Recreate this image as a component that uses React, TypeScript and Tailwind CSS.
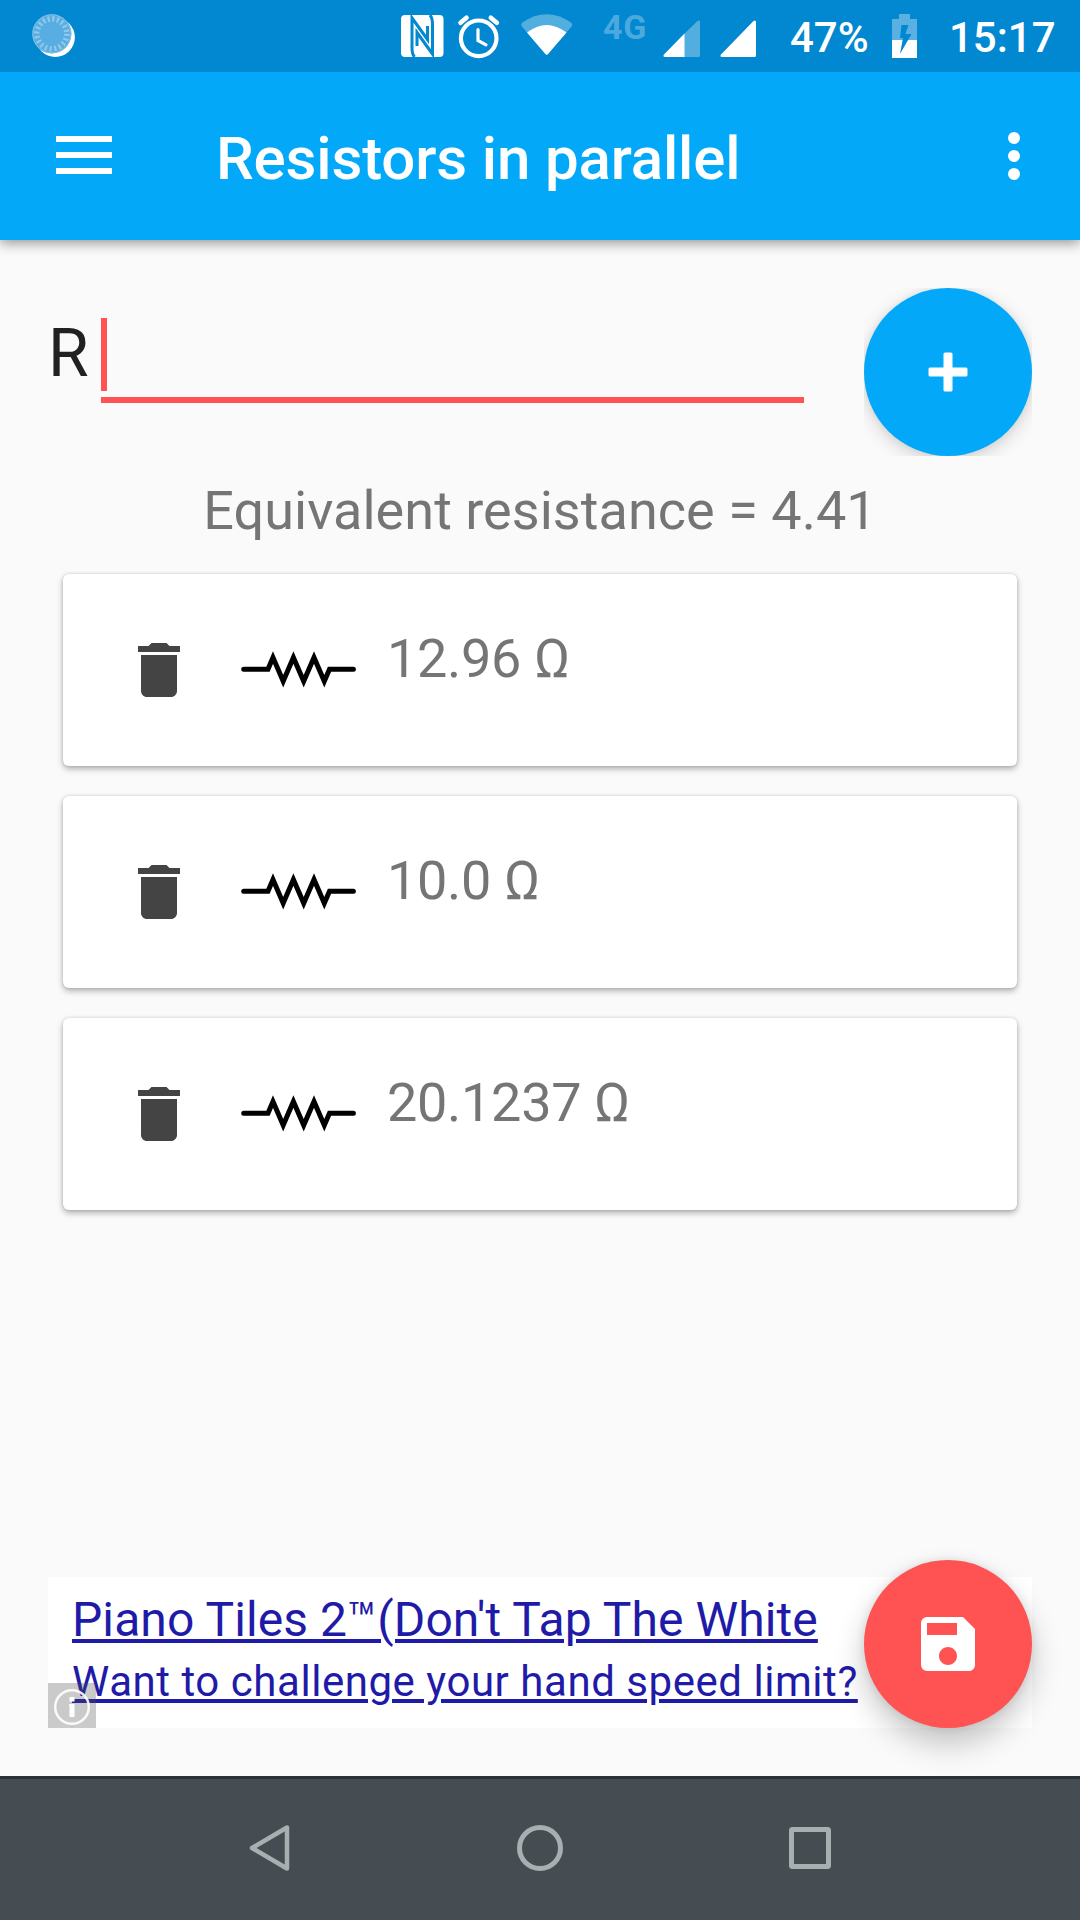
import React from "react";
import { MdDelete, MdSave } from "react-icons/md";

const resistors = ["12.96 Ω", "10.0 Ω", "20.1237 Ω"];

function StatusBar() {
  return (
    <div className="relative z-20 flex h-[72px] shrink-0 bg-[#0288d1] text-[42px] font-medium leading-[75px] text-white">
      <svg className="ml-[30px] h-[72px] w-[48px]" viewBox="30 0 48 72">
        <circle cx="55.3" cy="37.3" r="19.6" fill="#fff" />
        <circle cx="51.8" cy="33.8" r="19.6" fill="#58aee2" />
        <circle cx="51.8" cy="33.8" r="15" fill="none" stroke="#94c8ea" strokeWidth="5.500" strokeDasharray="2.1 2.612" />
        <circle cx="51.8" cy="33.8" r="19" fill="none" stroke="#7fc0e8" strokeWidth="1" />
      </svg>
      <svg className="ml-[320px] h-[72px] w-[50px]" viewBox="398 0 50 72">
        <rect x="401" y="15" width="42.5" height="42" rx="4" fill="#fff" />
        <path d="M414.500 57 Q412 54 412 48 V18 L427.500 39.500 V26 M430 15 Q432.500 18 432.500 24 V54 L417 32.500 V46" fill="none" stroke="#0288d1" strokeWidth="3" />
      </svg>
      <svg className="ml-[6px] h-[72px] w-[50px]" viewBox="454 0 50 72" fill="none" stroke="#fff" strokeLinecap="round">
        <circle cx="478.700" cy="38.300" r="17.800" strokeWidth="4.200" />
        <path d="M478 29.500 V40.500 L486 44.800" strokeWidth="3.200" />
        <path d="M460.500 22.800 L466.500 17.800 M490.800 17.800 L496.800 22.800" strokeWidth="4.600" />
      </svg>
      <svg className="ml-[14px] h-[72px] w-[58px]" viewBox="518 0 58 72" fill="#fff">
        <path d="M521.500 26 Q520.500 24 522.500 22.500 Q546.700 6 571 22.500 Q573 24 572 26 L548 54 Q546.700 55.500 545.400 54 Z" opacity="0.32" />
        <path d="M527 32.500 Q546.700 17.500 566.500 32.500 L548 54 Q546.700 55.500 545.400 54 Z" />
      </svg>
      <span className="ml-[27px] w-[50px] text-[34px] font-bold leading-[54px] tracking-[0.8px] text-[#4ca9de]">4G</span>
      <svg className="ml-[7px] h-[72px] w-[110px]" viewBox="660 0 110 72" fill="#fff">
        <path d="M684 34 L697.500 21 Q700 19.500 700 22 V55.500 Q700 57 698.500 57 H684 Z" opacity="0.32" />
        <path d="M684.500 33.500 V57 H665 Q662.500 56.500 664 54.500 Z" />
        <path d="M721 54.500 L753.500 21 Q756 19.500 756 22 V55.500 Q756 57 754.500 57 H722 Q719.500 56.500 721 54.500 Z" />
      </svg>
      <span className="ml-[20px] w-[96px]">47%</span>
      <svg className="ml-[4px] h-[72px] w-[30px]" viewBox="890 0 30 72">
        <path d="M892 19 H899 V14 H910 V19 H917 V40 H892 Z" fill="#5ab0e1" />
        <path d="M892 40 H917 V58 H892 Z" fill="#fff" />
        <path d="M901.500 25 H908.500 L905.500 34 H911.500 L900 54 L903 38 H900 Z" fill="#0288d1" />
      </svg>
      <span className="ml-[29px]">15:17</span>
    </div>
  );
}

function AppBar() {
  return (
    <header className="relative z-10 flex h-[168px] shrink-0 items-center bg-[#03a9f8] pl-[56px] pr-[60px] text-white shadow-[0_3px_12px_rgba(0,0,0,0.42)]">
      <div className="mb-[2px] flex w-[56px] flex-col gap-[10px]">
        <div className="h-[6px] bg-white" />
        <div className="h-[6px] bg-white" />
        <div className="h-[6px] bg-white" />
      </div>
      <h1 className="ml-[104px] mt-[5px] whitespace-nowrap text-[60px] font-medium leading-[72px] tracking-[-0.15px]">Resistors in parallel</h1>
      <div className="ml-auto flex flex-col gap-[6px]">
        <div className="size-[12px] rounded-full bg-white" />
        <div className="size-[12px] rounded-full bg-white" />
        <div className="size-[12px] rounded-full bg-white" />
      </div>
    </header>
  );
}

function ResistorIcon() {
  return (
    <svg className="ml-[44px] h-[72px] w-[120px]" viewBox="239 634 120 72" fill="none" stroke="#000" strokeWidth="5" strokeLinecap="round" strokeMiterlimit="10">
      <path d="M243.700 669.300 H268 L273 657.500 L283.200 681.200 L293.400 657.500 L303.700 681.200 L314 657.500 L324.300 681.200 L329.500 669.300 H353.400" />
    </svg>
  );
}

function ResistorCard({ value }: { value: string }) {
  return (
    <div className="flex h-[192px] items-start rounded-[6px] bg-white pl-[60px] pt-[60px] shadow-[0_3px_6px_rgba(0,0,0,0.3),0_0_3px_rgba(0,0,0,0.14)]">
      <MdDelete className="size-[72px] text-[#444444]" />
      <ResistorIcon />
      <span className="ml-[28px] mt-[-7px] text-[54px] leading-[64px] tracking-[-0.3px] text-[#757575]">{value}</span>
    </div>
  );
}

export default function App() {
  return (
    <div className="flex h-[1920px] w-[1080px] flex-col overflow-hidden bg-[#fafafa] font-[Roboto,sans-serif]">
      <StatusBar />
      <AppBar />
      <main className="flex grow flex-col px-[48px]">
        <div className="mt-[48px] flex h-[168px]">
          <span className="mt-[26px] w-[53px] text-[66px] leading-[80px] text-[#212121]">R</span>
          <div className="mt-[30px] h-[85px] w-[703px] border-b-[6px] border-[#ff5252]">
            <div className="h-[73px] w-[6px] bg-[#ff5252]" />
          </div>
          <div className="ml-auto size-[168px] overflow-hidden">
            <button className="flex size-[168px] items-center justify-center rounded-full bg-[#03a9f8] shadow-[0_5px_18px_rgba(0,0,0,0.16),0_0_8px_rgba(0,0,0,0.05)]">
              <svg className="size-[40px]" viewBox="0 0 40 40" fill="#fff">
                <rect x="0.500" y="15.500" width="39" height="9" rx="1.500" />
                <rect x="15.500" y="0.500" width="9" height="39" rx="1.500" />
              </svg>
            </button>
          </div>
        </div>
        <p className="mt-[23px] text-center text-[54px] leading-[64px] tracking-[0.04px] text-[#757575]">Equivalent resistance = 4.41</p>
        <div className="mt-[31px] flex flex-col gap-[30px] px-[15px]">
          {resistors.map((r) => (
            <ResistorCard key={r} value={r} />
          ))}
        </div>
        <div className="relative mb-[48px] mt-auto h-[151px] bg-white pl-[24px] text-[#1f1ba8]">
          <p className="whitespace-nowrap pt-[15px] text-[48px] leading-[56px] tracking-[0.09px] underline decoration-[4px] underline-offset-[3px]">Piano Tiles 2™(Don't Tap The White</p>
          <p className="mt-[9px] whitespace-nowrap text-[42px] leading-[50px] tracking-[0.54px] underline decoration-[4px] underline-offset-[3px]">Want to challenge your hand speed limit?</p>
          <svg className="absolute bottom-0 left-0 h-[45px] w-[48px]" viewBox="0 0 48 45">
            <rect width="48" height="45" fill="#505050" opacity="0.3" />
            <circle cx="24" cy="24" r="16.800" fill="none" stroke="#fff" strokeWidth="2.500" opacity="0.9" />
            <path d="M21.500 14 H26.500 V18.500 H21.500 Z M21 21 H26.500 V34 H21.500 V23 H21 Z" fill="#fff" />
          </svg>
          <button className="absolute bottom-0 right-0 flex size-[168px] items-center justify-center rounded-full bg-[#ff5252] text-white shadow-[0_16px_30px_rgba(0,0,0,0.22),0_0_10px_rgba(0,0,0,0.1)]">
            <MdSave className="size-[72px]" />
          </button>
        </div>
      </main>
      <nav className="flex h-[144px] shrink-0 items-center justify-center gap-[222px] border-t-[3px] border-[#2b3238] bg-[#464d52] pb-[3px]">
        <svg className="size-[48px]" viewBox="0 0 48 48" fill="none" stroke="#a9aeb1" strokeWidth="4.500" strokeLinejoin="round">
          <path d="M6 24 L41 3.500 V44.500 Z" />
        </svg>
        <svg className="size-[48px]" viewBox="0 0 48 48" fill="none" stroke="#a9aeb1" strokeWidth="5">
          <circle cx="24" cy="24" r="20.500" />
        </svg>
        <svg className="size-[48px]" viewBox="0 0 48 48" fill="none" stroke="#a9aeb1" strokeWidth="5">
          <rect x="5.500" y="5.500" width="37" height="37" rx="1" />
        </svg>
      </nav>
    </div>
  );
}
